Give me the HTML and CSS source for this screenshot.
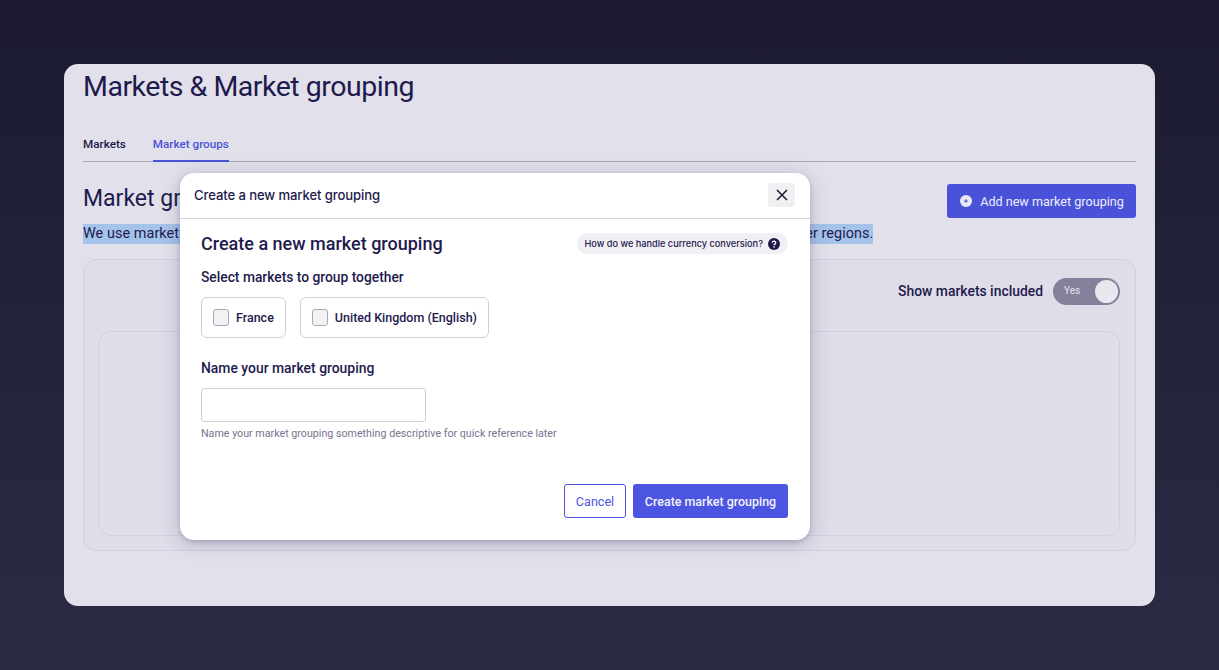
FILE: index.html
```html
<!DOCTYPE html>
<html lang="en">
<head>
<meta charset="utf-8">
<title>Markets &amp; Market grouping</title>
<link rel="stylesheet" href="styles.css">
</head>
<body>
<main class="card">
  <h1 class="title">Markets &amp; Market grouping</h1>
  <nav class="tabs">
    <a class="tab">Markets</a>
    <a class="tab tab-active">Market groups</a>
  </nav>
  <div class="section-head">
    <h2 class="section-title">Market groups</h2>
    <button class="btn btn-add">
      <svg class="add-icon" width="12" height="12" viewBox="0 0 12 12"><circle cx="6" cy="6" r="6" fill="#e9e9f6"/><path d="M6 4.2v3.6M4.2 6h3.6" stroke="#4a52d9" stroke-width="1.2"/></svg>
      Add new market grouping
    </button>
  </div>
  <p class="lead"><span class="selected">We use market groups to report on performance across multiple markets, and to compare them against your other regions.</span></p>
  <section class="panel">
    <div class="panel-top">
      <span class="toggle-label">Show markets included</span>
      <span class="toggle"><span class="toggle-text">Yes</span><span class="knob"></span></span>
    </div>
    <div class="inner-panel"></div>
  </section>

  <div class="dialog">
    <header class="dialog-head">
      <span class="dialog-head-title">Create a new market grouping</span>
      <button class="close" aria-label="Close">
        <svg width="12" height="12" viewBox="0 0 12 12"><path d="M1 1l10 10M11 1L1 11" stroke="#1a1a2b" stroke-width="1.5"/></svg>
      </button>
    </header>
    <div class="dialog-body">
      <div class="body-top">
        <h3 class="dialog-title">Create a new market grouping</h3>
        <span class="pill">How do we handle currency conversion?
          <svg width="12" height="12" viewBox="0 0 12 12"><circle cx="6" cy="6" r="6" fill="#1e1a4d"/><path d="M4.3 4.7a1.7 1.6 0 1 1 2.6 1.4c-.6.4-.9.6-.9 1.2" fill="none" stroke="#fff" stroke-width="1.3"/><rect x="5.3" y="8.3" width="1.4" height="1.4" fill="#fff"/></svg>
        </span>
      </div>
      <div class="field-label">Select markets to group together</div>
      <div class="options">
        <label class="option"><span class="check"></span>France</label>
        <label class="option"><span class="check"></span>United Kingdom (English)</label>
      </div>
      <div class="name-label">Name your market grouping</div>
      <div class="input"></div>
      <div class="hint">Name your market grouping something descriptive for quick reference later</div>
      <div class="actions">
        <button class="btn btn-outline">Cancel</button>
        <button class="btn btn-create">Create market grouping</button>
      </div>
    </div>
  </div>
</main>
</body>
</html>
```

FILE: styles.css
```css
* { box-sizing: border-box; }
html, body { margin: 0; height: 100%; }
body {
  width: 1219px;
  height: 670px;
  overflow: hidden;
  padding: 64px;
  background: linear-gradient(180deg, #1b1a30 0%, #23233a 50%, #2b2c44 100%);
  font-family: Roboto, "Noto Sans", sans-serif;
  color: #1e1a4d;
}
.card {
  position: relative;
  width: 1091px;
  height: 542px;
  padding: 0 19px;
  border-radius: 14px;
  background: #e2e1eb;
  overflow: hidden;
}
.title {
  margin: 0;
  height: 44px;
  font-size: 28.5px;
  line-height: 45px;
  font-weight: 400;
  letter-spacing: -0.48px;
  color: #1e1a4d;
}
.tabs {
  display: flex;
  gap: 27px;
  height: 54px;
  padding-top: 28px;
  border-bottom: 1px solid #a9a8b4;
}
.tab {
  height: 26px;
  font-size: 11.7px;
  font-weight: 500;
  line-height: 16px;
  color: #1e1a4d;
}
.tab-active {
  color: #4a52d9;
  border-bottom: 2px solid #4a52d9;
}
.section-head {
  display: flex;
  justify-content: space-between;
  align-items: flex-start;
  height: 34px;
  margin-top: 22px;
}
.section-title {
  margin: 0;
  font-size: 23px;
  line-height: 29px;
  font-weight: 400;
}
.btn {
  display: inline-flex;
  align-items: center;
  justify-content: center;
  height: 34px;
  border-radius: 3px;
  border: 1px solid transparent;
  font-family: Roboto, sans-serif;
  font-size: 12.6px;
  font-weight: 500;
  padding: 0;
}
.btn-add {
  width: 189px;
  gap: 8px;
  padding-left: 1px;
  font-weight: 400;
  background: #4a52d9;
  color: #eeeefb;
}
.add-icon { flex: none; }
.lead {
  margin: 6px 0 0;
  height: 20px;
  font-size: 14.4px;
  line-height: 20px;
  letter-spacing: 0.07px;
  white-space: nowrap;
}
.selected { display: inline-block; background: #a4c3ea; }
.panel {
  margin-top: 15px;
  width: 1053px;
  height: 292px;
  padding: 0 15px 0 14px;
  border: 1px solid #d0cfe6;
  border-radius: 13px;
  background: #dedde8;
}
.panel-top {
  display: flex;
  justify-content: flex-end;
  align-items: center;
  gap: 10px;
  height: 62px;
  margin-bottom: 9px;
}
.toggle-label { font-size: 13.9px; font-weight: 500; }
.toggle {
  display: flex;
  align-items: center;
  justify-content: space-between;
  width: 67px;
  height: 27px;
  padding: 0 2px 0 11px;
  border-radius: 14px;
  background: #85819c;
}
.toggle-text { font-size: 10px; color: #e4e3ec; position: relative; top: -1px; }
.knob {
  width: 23px;
  height: 23px;
  border-radius: 50%;
  background: #e8e7ef;
}
.inner-panel {
  height: 205px;
  border: 1px solid #d0cfe6;
  border-radius: 13px;
}
.dialog {
  position: absolute;
  left: 116px;
  top: 109px;
  width: 630px;
  height: 367px;
  border-radius: 14px;
  background: #fff;
  box-shadow: 0 3px 20px rgba(50, 48, 90, 0.25), 0 2px 4px rgba(50, 48, 90, 0.2);
}
.dialog-head {
  display: flex;
  align-items: center;
  justify-content: space-between;
  height: 46px;
  padding: 0 15px 1px 14px;
  border-bottom: 1px solid #d3d2dc;
}
.dialog-head-title {
  font-family: Inter, sans-serif;
  font-size: 13.1px;
  font-weight: 500;
  letter-spacing: -0.1px;
  color: #1e1a4d;
}
.close {
  display: flex;
  align-items: center;
  justify-content: center;
  width: 27px;
  height: 24px;
  border: 0;
  padding: 0;
  border-radius: 3px;
  background: #f0f0f2;
}
.dialog-body { padding: 0 22px 0 21px; }
.body-top {
  display: flex;
  justify-content: space-between;
  align-items: center;
  height: 50px;
  padding-bottom: 1px;
}
.dialog-title {
  margin: 0;
  font-size: 18px;
  font-weight: 500;
}
.pill {
  display: inline-flex;
  align-items: center;
  gap: 5px;
  height: 21px;
  padding: 0 8px 0 7px;
  border-radius: 11px;
  background: #f0eff3;
  font-family: Inter, sans-serif;
  font-size: 9.2px;
  font-weight: 500;
}
.field-label {
  font-size: 13.8px;
  line-height: 17px;
  font-weight: 500;
}
.options {
  display: flex;
  gap: 14px;
  margin-top: 11px;
}
.option {
  display: flex;
  align-items: center;
  gap: 7px;
  height: 41px;
  padding: 0 11px 1px;
  border: 1px solid #cfced8;
  border-radius: 6px;
  font-size: 12.5px;
  font-weight: 500;
}
.check {
  width: 16px;
  height: 17px;
  border: 1px solid #a9a8b8;
  border-radius: 3px;
  background: #f2f2f5;
}
.name-label {
  margin-top: 22px;
  font-size: 13.9px;
  line-height: 17px;
  font-weight: 500;
}
.input {
  width: 225px;
  height: 34px;
  margin-top: 11px;
  border: 1px solid #cfced8;
  border-radius: 3px;
}
.hint {
  margin-top: 5px;
  font-size: 10.7px;
  line-height: 13px;
  color: #77748f;
}
.actions {
  display: flex;
  justify-content: flex-end;
  gap: 7px;
  margin-top: 44px;
}
.btn-outline {
  width: 62px;
  background: #fff;
  border-color: #4c55e2;
  color: #4c55e2;
  font-weight: 400;
}
.btn-create {
  width: 155px;
  font-size: 12.45px;
  background: #4c55e2;
  color: #f2f2fd;
}
```
